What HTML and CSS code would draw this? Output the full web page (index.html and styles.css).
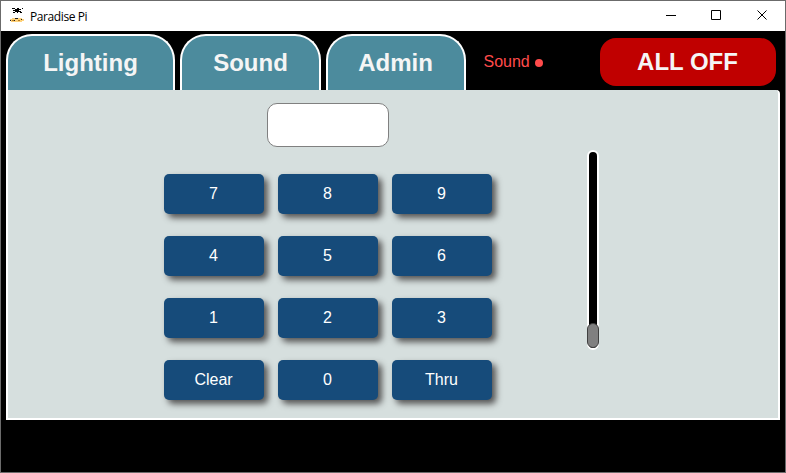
FILE: index.html
```html
<!DOCTYPE html>
<html lang="en">
<head>
<meta charset="utf-8">
<title>Paradise Pi</title>
<link rel="stylesheet" href="styles.css">
</head>
<body>
<div class="window">
  <header class="titlebar">
    <svg class="logo" width="16" height="16" viewBox="0 0 16 16" shape-rendering="crispEdges">
      <path fill="#000" d="M3 0h3v1h2V0h2v1h2v1h-2v1h2v1h1v1h-2V4H9v1H8V4H6v1H4V4h2V3H4V2h2V1H3zM13 0h1v1h-1z"/>
      <path fill="#ffd27a" d="M3 10h10v1h2v2h-2v1H2v-1H1v-2h2z"/>
      <path fill="#b97c22" d="M3 12h2v1H3zM9 12h2v1H9z"/>
      <path fill="#222" d="M6 10h3v1H6zM12 11h1v1h-1zM5 12h1v1H5zM1 12h1v1H1z"/>
    </svg>
    <span class="title">Paradise Pi</span>
    <svg class="controls" width="138" height="30" viewBox="0 0 138 30" fill="none" stroke="#000">
      <path d="M19 14.5h10M64.500 9.500h9v9h-9zM110.500 9.500l9 9M119.500 9.500l-9 9"/>
    </svg>
  </header>
  <nav class="nav">
    <button class="tab tab-lighting">Lighting</button>
    <button class="tab tab-sound">Sound</button>
    <button class="tab tab-admin">Admin</button>
    <div class="status">Sound <i class="dot"></i></div>
    <button class="all-off">ALL OFF</button>
  </nav>
  <main class="panel">
    <section class="keypad">
      <input class="display" type="text" aria-label="Channel">
      <div class="keys">
        <button>7</button><button>8</button><button>9</button>
        <button>4</button><button>5</button><button>6</button>
        <button>1</button><button>2</button><button>3</button>
        <button>Clear</button><button>0</button><button>Thru</button>
      </div>
    </section>
    <div class="slider"><div class="thumb"></div></div>
  </main>
</div>
</body>
</html>
```
FILE: styles.css
```css
* { box-sizing: border-box; }
body {
  margin: 0;
  overflow: hidden;
  font-family: "Liberation Sans", Arial, sans-serif;
}
button { border: 0; margin: 0; padding: 0; font-family: inherit; }
.window {
  width: 786px;
  height: 473px;
  border: 1px solid #6b6b6b;
  background: #000;
}
.titlebar {
  display: flex;
  align-items: center;
  height: 30px;
  padding-left: 8px;
  background: #fff;
}
.title {
  margin-left: 5px;
  font: 12px "Open Sans", "Noto Sans", sans-serif;
  letter-spacing: -0.4px;
  color: #000;
}
.controls { margin-left: auto; }
.nav {
  display: flex;
  align-items: flex-start;
  gap: 5px;
  height: 59px;
  padding: 3px 9px 0 5px;
}
.tab {
  height: 56px;
  border: 2px solid #fff;
  border-bottom: 0;
  border-radius: 26px 26px 0 0;
  background: #4c8b9d;
  color: #f5f5f5;
  font-size: 24px;
  font-weight: bold;
}
.tab-lighting { width: 169px; }
.tab-sound { width: 141px; }
.tab-admin { width: 140px; padding-right: 1px; }
.status {
  display: flex;
  align-items: center;
  gap: 5px;
  height: 56px;
  margin-left: 12.5px;
  color: #ff4b4b;
  font-size: 16px;
}
.dot { width: 8px; height: 8px; margin-top: 1px; border-radius: 50%; background: #ff4b4b; }
.all-off {
  width: 176px;
  height: 48px;
  margin: 4px 0 0 auto;
  padding-right: 1px;
  border-radius: 16px;
  background: #c00000;
  color: #f5f5f5;
  font-size: 24px;
  font-weight: bold;
}
.panel {
  display: flex;
  align-items: flex-start;
  width: 774px;
  height: 330px;
  margin-left: 5px;
  padding-left: 156px;
  border: 2px solid #fff;
  border-top: 0;
  border-top-right-radius: 4px;
  background: #d6dfde;
}
.keypad {
  display: flex;
  flex-direction: column;
  align-items: center;
  gap: 27px;
  padding-top: 13px;
}
.display {
  width: 122px;
  height: 44px;
  border: 1px solid #808080;
  border-radius: 10px;
  background: #fff;
  font-size: 16px;
}
.keys {
  display: grid;
  grid-template-columns: repeat(3, 100px);
  grid-auto-rows: 40px;
  gap: 22px 14px;
}
.keys button {
  padding-right: 1px;
  border-radius: 5px;
  background: #164b7a;
  box-shadow: 4px 4px 6px #555;
  color: #fff;
  font-size: 16px;
}
.slider {
  display: flex;
  align-items: flex-end;
  justify-content: center;
  width: 12px;
  height: 200px;
  margin: 60px 0 0 95px;
  border: 2px solid #fff;
  border-radius: 6px;
  background: #000;
}
.thumb {
  flex: none;
  width: 12px;
  height: 25px;
  border: 1px solid #404040;
  border-radius: 6px;
  background: #808080;
}
```
